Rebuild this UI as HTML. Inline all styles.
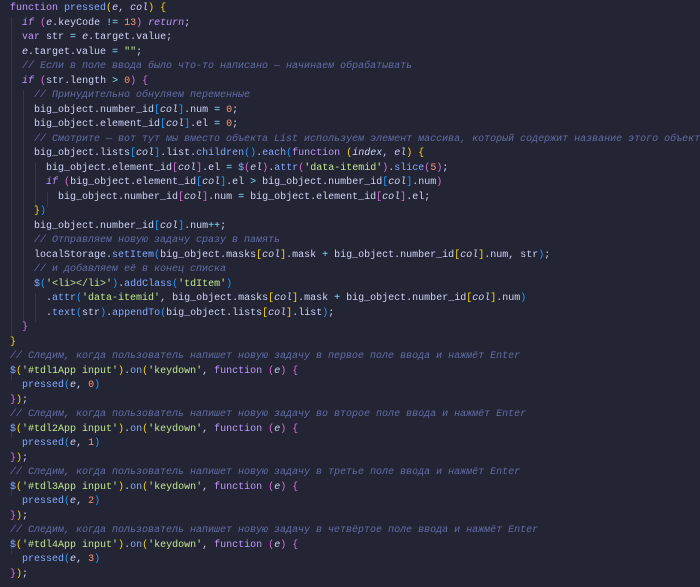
<!DOCTYPE html>
<html><head><meta charset="utf-8"><style>
html,body{margin:0;padding:0;background:#232434;width:700px;height:587px;overflow:hidden}
#c{position:absolute;left:10px;top:2px;font-family:"Liberation Mono","DejaVu Sans Mono",monospace;font-size:10px;color:#cdd5f5}
.l{height:14.5px;line-height:14.5px;white-space:pre}
.k{color:#c099ff}.i{font-style:italic}
.f{color:#82aaff}.s{color:#c3e88d}.n{color:#ff966c}
.c{color:#636da6;font-style:italic}.o{color:#86e1fc}
.y{color:#ffd700}.m{color:#da70d6}.b{color:#179fff}
.g{position:absolute;width:1px;background:#34364a}
</style></head><body>
<div class="g" style="left:11px;top:17px;height:319px"></div>
<div class="g" style="left:23px;top:90px;height:232px"></div>
<div class="g" style="left:35px;top:163px;height:44px"></div>
<div class="g" style="left:47px;top:192px;height:15px"></div>
<div class="g" style="left:35px;top:293px;height:29px"></div>
<div class="g" style="left:11px;top:365px;height:15px"></div>
<div class="g" style="left:11px;top:423px;height:15px"></div>
<div class="g" style="left:11px;top:481px;height:15px"></div>
<div class="g" style="left:11px;top:539px;height:15px"></div>
<div id="c"><div class="l"><span class="k">function</span> <span class="f">pressed</span><span class="y">(</span><span class="i">e</span>, <span class="i">col</span><span class="y">)</span> <span class="y">{</span></div><div class="l">  <span class="k i">if</span> <span class="m">(</span><span class="i">e</span>.keyCode <span class="o">!=</span> <span class="n">13</span><span class="m">)</span> <span class="k i">return</span>;</div><div class="l">  <span class="k">var</span> str <span class="o">=</span> <span class="i">e</span>.target.value;</div><div class="l">  <span class="i">e</span>.target.value <span class="o">=</span> <span class="s">""</span>;</div><div class="l">  <span class="c">// Если в поле ввода было что-то написано — начинаем обрабатывать</span></div><div class="l">  <span class="k i">if</span> <span class="m">(</span>str.length <span class="o">&gt;</span> <span class="n">0</span><span class="m">)</span> <span class="m">{</span></div><div class="l">    <span class="c">// Принудительно обнуляем переменные</span></div><div class="l">    big_object.number_id<span class="b">[</span><span class="i">col</span><span class="b">]</span>.num <span class="o">=</span> <span class="n">0</span>;</div><div class="l">    big_object.element_id<span class="b">[</span><span class="i">col</span><span class="b">]</span>.el <span class="o">=</span> <span class="n">0</span>;</div><div class="l">    <span class="c">// Смотрите — вот тут мы вместо объекта List используем элемент массива, который содержит название этого объекта</span></div><div class="l">    big_object.lists<span class="b">[</span><span class="i">col</span><span class="b">]</span>.list.<span class="f">children</span><span class="b">()</span>.<span class="f">each</span><span class="b">(</span><span class="k">function</span> <span class="y">(</span><span class="i">index</span>, <span class="i">el</span><span class="y">)</span> <span class="y">{</span></div><div class="l">      big_object.element_id<span class="m">[</span><span class="i">col</span><span class="m">]</span>.el <span class="o">=</span> <span class="f">$</span><span class="m">(</span><span class="i">el</span><span class="m">)</span>.<span class="f">attr</span><span class="m">(</span><span class="s">'data-itemid'</span><span class="m">)</span>.<span class="f">slice</span><span class="m">(</span><span class="n">5</span><span class="m">)</span>;</div><div class="l">      <span class="k i">if</span> <span class="m">(</span>big_object.element_id<span class="b">[</span><span class="i">col</span><span class="b">]</span>.el <span class="o">&gt;</span> big_object.number_id<span class="b">[</span><span class="i">col</span><span class="b">]</span>.num<span class="m">)</span></div><div class="l">        big_object.number_id<span class="m">[</span><span class="i">col</span><span class="m">]</span>.num <span class="o">=</span> big_object.element_id<span class="m">[</span><span class="i">col</span><span class="m">]</span>.el;</div><div class="l">    <span class="y">}</span><span class="b">)</span></div><div class="l">    big_object.number_id<span class="b">[</span><span class="i">col</span><span class="b">]</span>.num<span class="o">++</span>;</div><div class="l">    <span class="c">// Отправляем новую задачу сразу в память</span></div><div class="l">    localStorage.<span class="f">setItem</span><span class="b">(</span>big_object.masks<span class="y">[</span><span class="i">col</span><span class="y">]</span>.mask <span class="o">+</span> big_object.number_id<span class="y">[</span><span class="i">col</span><span class="y">]</span>.num, str<span class="b">)</span>;</div><div class="l">    <span class="c">// и добавляем её в конец списка</span></div><div class="l">    <span class="f">$</span><span class="b">(</span><span class="s">'&lt;li&gt;&lt;/li&gt;'</span><span class="b">)</span>.<span class="f">addClass</span><span class="b">(</span><span class="s">'tdItem'</span><span class="b">)</span></div><div class="l">      .<span class="f">attr</span><span class="b">(</span><span class="s">'data-itemid'</span>, big_object.masks<span class="y">[</span><span class="i">col</span><span class="y">]</span>.mask <span class="o">+</span> big_object.number_id<span class="y">[</span><span class="i">col</span><span class="y">]</span>.num<span class="b">)</span></div><div class="l">      .<span class="f">text</span><span class="b">(</span>str<span class="b">)</span>.<span class="f">appendTo</span><span class="b">(</span>big_object.lists<span class="y">[</span><span class="i">col</span><span class="y">]</span>.list<span class="b">)</span>;</div><div class="l">  <span class="m">}</span></div><div class="l"><span class="y">}</span></div><div class="l"><span class="c">// Следим, когда пользователь напишет новую задачу в первое поле ввода и нажмёт Enter</span></div><div class="l"><span class="f">$</span><span class="y">(</span><span class="s">'#tdl1App input'</span><span class="y">)</span>.<span class="f">on</span><span class="y">(</span><span class="s">'keydown'</span>, <span class="k">function</span> <span class="m">(</span><span class="i">e</span><span class="m">)</span> <span class="m">{</span></div><div class="l">  <span class="f">pressed</span><span class="b">(</span><span class="i">e</span>, <span class="n">0</span><span class="b">)</span></div><div class="l"><span class="m">}</span><span class="y">)</span>;</div><div class="l"><span class="c">// Следим, когда пользователь напишет новую задачу во второе поле ввода и нажмёт Enter</span></div><div class="l"><span class="f">$</span><span class="y">(</span><span class="s">'#tdl2App input'</span><span class="y">)</span>.<span class="f">on</span><span class="y">(</span><span class="s">'keydown'</span>, <span class="k">function</span> <span class="m">(</span><span class="i">e</span><span class="m">)</span> <span class="m">{</span></div><div class="l">  <span class="f">pressed</span><span class="b">(</span><span class="i">e</span>, <span class="n">1</span><span class="b">)</span></div><div class="l"><span class="m">}</span><span class="y">)</span>;</div><div class="l"><span class="c">// Следим, когда пользователь напишет новую задачу в третье поле ввода и нажмёт Enter</span></div><div class="l"><span class="f">$</span><span class="y">(</span><span class="s">'#tdl3App input'</span><span class="y">)</span>.<span class="f">on</span><span class="y">(</span><span class="s">'keydown'</span>, <span class="k">function</span> <span class="m">(</span><span class="i">e</span><span class="m">)</span> <span class="m">{</span></div><div class="l">  <span class="f">pressed</span><span class="b">(</span><span class="i">e</span>, <span class="n">2</span><span class="b">)</span></div><div class="l"><span class="m">}</span><span class="y">)</span>;</div><div class="l"><span class="c">// Следим, когда пользователь напишет новую задачу в четвёртое поле ввода и нажмёт Enter</span></div><div class="l"><span class="f">$</span><span class="y">(</span><span class="s">'#tdl4App input'</span><span class="y">)</span>.<span class="f">on</span><span class="y">(</span><span class="s">'keydown'</span>, <span class="k">function</span> <span class="m">(</span><span class="i">e</span><span class="m">)</span> <span class="m">{</span></div><div class="l">  <span class="f">pressed</span><span class="b">(</span><span class="i">e</span>, <span class="n">3</span><span class="b">)</span></div><div class="l"><span class="m">}</span><span class="y">)</span>;</div></div>
</body></html>
